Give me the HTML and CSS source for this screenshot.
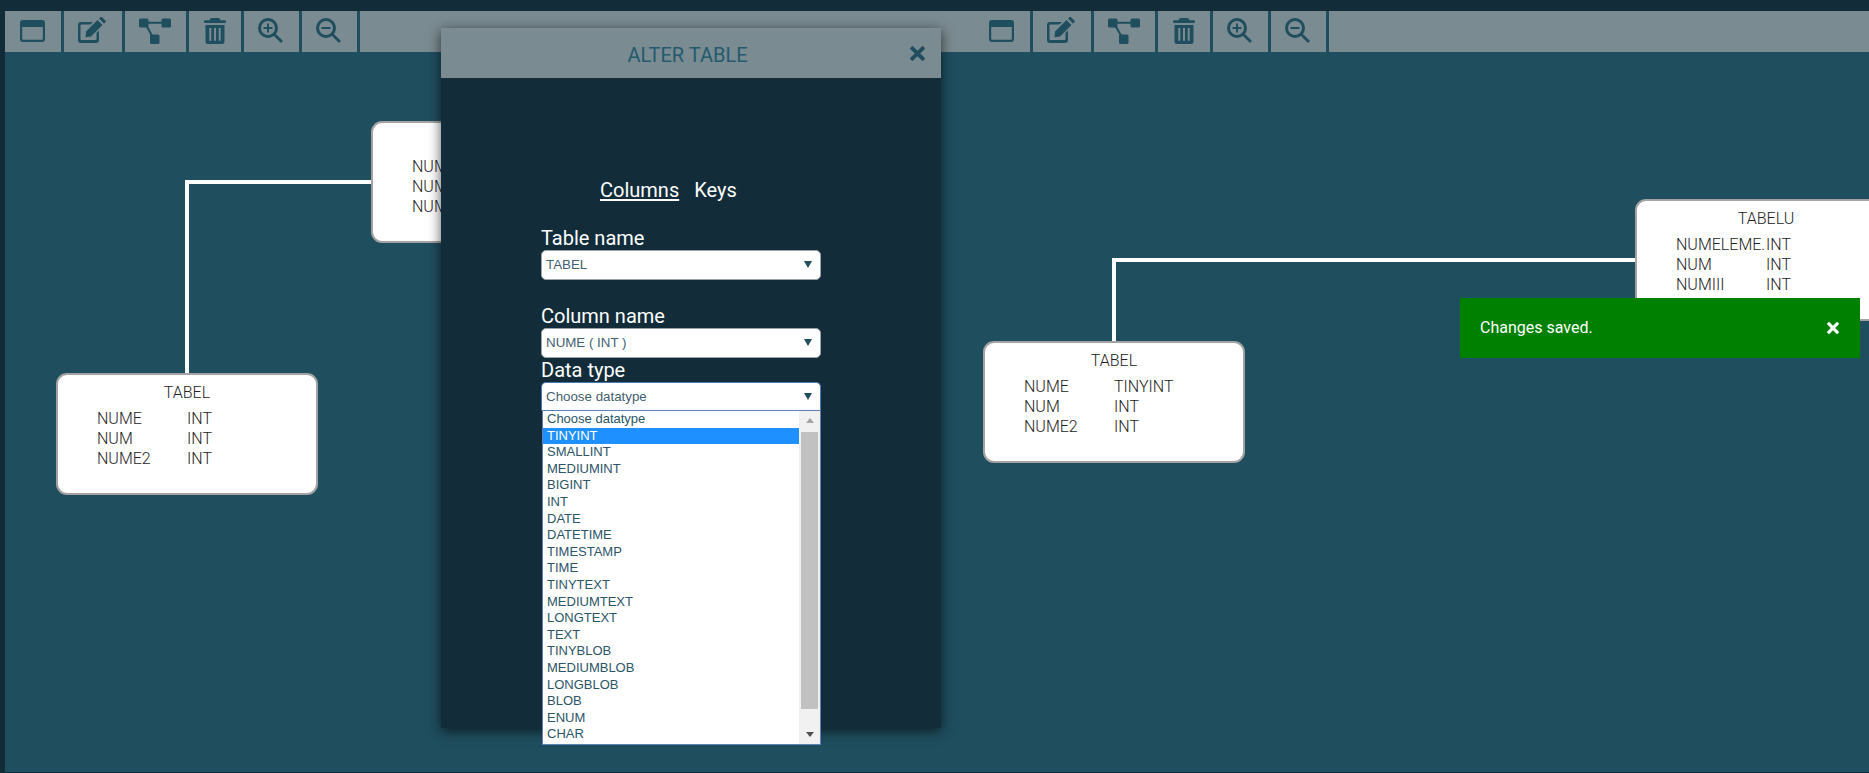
FILE: index.html
```html
<!DOCTYPE html>
<html lang="en">
<head>
<meta charset="utf-8">
<title>Alter table</title>
<link rel="stylesheet" href="styles.css">
</head>
<body>
<svg class="defs" width="0" height="0" aria-hidden="true">
  <defs>
    <symbol id="i-window" viewBox="0 0 25 22"><path d="M3 0h19a3 3 0 0 1 3 3v16a3 3 0 0 1-3 3H3a3 3 0 0 1-3-3V3a3 3 0 0 1 3-3zM2.200 7v11.800a1 1 0 0 0 1 1h18.600a1 1 0 0 0 1-1V7z" fill-rule="evenodd"/></symbol>
    <symbol id="i-edit" viewBox="0 0 28 26"><path d="M3 5h12l-2.500 2.500H3.500a1 1 0 0 0-1 1V22a1 1 0 0 0 1 1h14a1 1 0 0 0 1-1v-6l2.500-2.500V23a3 3 0 0 1-3 3H3a3 3 0 0 1-3-3V8a3 3 0 0 1 3-3z"/><path d="M8 14.500 19.500 3l5 5L13 19.500l-5.500.7zM21 1.500 22.500.3a1.200 1.200 0 0 1 1.600 0l3.400 3.400a1.200 1.200 0 0 1 0 1.600L26 6.500z"/></symbol>
    <symbol id="i-tree" viewBox="0 0 32 26"><rect width="9.500" height="9" y="0.500" rx="1.500"/><rect x="22.500" width="9.500" height="9" y="0.500" rx="1.500"/><rect x="11" y="16.500" width="9.500" height="9.500" rx="1.500"/><path d="M9 3.800h14v2H9zM6.500 8l1.800-1 5.500 10-1.800 1z"/></symbol>
    <symbol id="i-trash" viewBox="0 0 22 26"><path d="M7.500 0h7a1.500 1.500 0 0 1 1.400 1L16.500 2.200H21a1 1 0 0 1 1 1v.9a1 1 0 0 1-1 1H1a1 1 0 0 1-1-1v-.9a1 1 0 0 1 1-1h4.500L6.100 1A1.500 1.500 0 0 1 7.500 0z"/><path fill-rule="evenodd" d="M1.500 7h19v16.500A2.500 2.500 0 0 1 18 26H4a2.500 2.500 0 0 1-2.500-2.500zM5.300 10v12.800h2V10zM10 10v12.800h2V10zM14.700 10v12.800h2V10z"/></symbol>
    <symbol id="i-zoom-in" viewBox="0 0 25 25"><path fill-rule="evenodd" d="M10 0a10 10 0 1 1 0 20a10 10 0 0 1 0-20zm0 3a7 7 0 1 0 0 14a7 7 0 0 0 0-14z"/><path d="M15.500 17.500l2-2 7 7a.8.8 0 0 1 0 1.100l-.9.900a.8.8 0 0 1-1.100 0zM9 5.500h2V9h3.500v2H11v3.500H9V11H5.500V9H9z"/></symbol>
    <symbol id="i-zoom-out" viewBox="0 0 25 25"><path fill-rule="evenodd" d="M10 0a10 10 0 1 1 0 20a10 10 0 0 1 0-20zm0 3a7 7 0 1 0 0 14a7 7 0 0 0 0-14z"/><path d="M15.500 17.500l2-2 7 7a.8.8 0 0 1 0 1.100l-.9.900a.8.8 0 0 1-1.100 0zM5.500 9h9v2h-9z"/></symbol>
    <symbol id="i-close" viewBox="0 0 14 14"><path d="M3 .4 7 4.400 11 .4a1 1 0 0 1 1.400 0l1.200 1.200a1 1 0 0 1 0 1.400L9.600 7l4 4a1 1 0 0 1 0 1.400l-1.200 1.200a1 1 0 0 1-1.400 0L7 9.600l-4 4a1 1 0 0 1-1.400 0L.4 12.400a1 1 0 0 1 0-1.400l4-4-4-4a1 1 0 0 1 0-1.400L1.600.4A1 1 0 0 1 3 .4z"/></symbol>
  </defs>
</svg>

<div class="app">
  <div class="toolbars">
    <div class="toolbar">
      <button class="tool tool-a"><svg class="ic ic-window"><use href="#i-window"/></svg></button>
      <button class="tool tool-b"><svg class="ic ic-edit"><use href="#i-edit"/></svg></button>
      <button class="tool tool-c"><svg class="ic ic-tree"><use href="#i-tree"/></svg></button>
      <button class="tool tool-d"><svg class="ic ic-trash"><use href="#i-trash"/></svg></button>
      <button class="tool tool-e"><svg class="ic ic-zoom"><use href="#i-zoom-in"/></svg></button>
      <button class="tool tool-e"><svg class="ic ic-zoom"><use href="#i-zoom-out"/></svg></button>
    </div>
    <div class="toolbar toolbar-rest">
      <button class="tool tool-a"><svg class="ic ic-window"><use href="#i-window"/></svg></button>
      <button class="tool tool-b"><svg class="ic ic-edit"><use href="#i-edit"/></svg></button>
      <button class="tool tool-c"><svg class="ic ic-tree"><use href="#i-tree"/></svg></button>
      <button class="tool tool-d"><svg class="ic ic-trash"><use href="#i-trash"/></svg></button>
      <button class="tool tool-e"><svg class="ic ic-zoom"><use href="#i-zoom-in"/></svg></button>
      <button class="tool tool-e"><svg class="ic ic-zoom"><use href="#i-zoom-out"/></svg></button>
    </div>
  </div>

  <div class="canvas">
    <div class="wire wire-h1"></div>
    <div class="wire wire-v1"></div>
    <div class="wire wire-h2"></div>
    <div class="wire wire-v2"></div>

    <div class="node node-1">
      <div class="node-title">TABEL</div>
      <div class="node-row"><span>NUME</span><span>INT</span></div>
      <div class="node-row"><span>NUM</span><span>INT</span></div>
      <div class="node-row"><span>NUME2</span><span>INT</span></div>
    </div>
    <div class="node node-2">
      <div class="node-title">TABELU</div>
      <div class="node-row"><span>NUMELEME.</span><span>INT</span></div>
      <div class="node-row"><span>NUM</span><span>INT</span></div>
      <div class="node-row"><span>NUMIII</span><span>INT</span></div>
    </div>
    <div class="node node-3">
      <div class="node-title">TABEL</div>
      <div class="node-row"><span>NUME</span><span>TINYINT</span></div>
      <div class="node-row"><span>NUM</span><span>INT</span></div>
      <div class="node-row"><span>NUME2</span><span>INT</span></div>
    </div>
    <div class="node node-4">
      <div class="node-title">TABELU</div>
      <div class="node-row"><span>NUMELEME.</span><span>INT</span></div>
      <div class="node-row"><span>NUM</span><span>INT</span></div>
      <div class="node-row"><span>NUMIII</span><span>INT</span></div>
    </div>
  </div>

  <div class="toast">
    <span class="toast-text">Changes saved.</span>
    <svg class="toast-close"><use href="#i-close"/></svg>
  </div>

  <div class="modal">
    <div class="modal-head">
      <span class="modal-title">ALTER TABLE</span>
      <svg class="modal-close"><use href="#i-close"/></svg>
    </div>
    <div class="modal-body">
      <div class="tabs">
        <span class="tab tab-active">Columns</span>
        <span class="tab">Keys</span>
      </div>
      <div class="form">
        <div class="field field-table">
          <div class="label">Table name</div>
          <div class="select"><span>TABEL</span><i class="caret"></i></div>
        </div>
        <div class="field field-column">
          <div class="label">Column name</div>
          <div class="select"><span>NUME ( INT )</span><i class="caret"></i></div>
        </div>
        <div class="field field-type">
          <div class="label label-tight">Data type</div>
          <div class="select select-open"><span>Choose datatype</span><i class="caret"></i></div>
          <div class="dropdown">
            <ul class="options">
              <li>Choose datatype</li>
              <li class="selected">TINYINT</li>
              <li>SMALLINT</li>
              <li>MEDIUMINT</li>
              <li>BIGINT</li>
              <li>INT</li>
              <li>DATE</li>
              <li>DATETIME</li>
              <li>TIMESTAMP</li>
              <li>TIME</li>
              <li>TINYTEXT</li>
              <li>MEDIUMTEXT</li>
              <li>LONGTEXT</li>
              <li>TEXT</li>
              <li>TINYBLOB</li>
              <li>MEDIUMBLOB</li>
              <li>LONGBLOB</li>
              <li>BLOB</li>
              <li>ENUM</li>
              <li>CHAR</li>
            </ul>
            <div class="scrollbar">
              <i class="sb-up"></i>
              <div class="sb-track"><div class="sb-thumb"></div></div>
              <i class="sb-down"></i>
            </div>
          </div>
        </div>
      </div>
    </div>
  </div>
</div>
</body>
</html>
```
FILE: styles.css
```css
* { box-sizing: border-box; }
html, body { margin: 0; height: 100%; overflow: hidden; }
body { background: #122d39; font-family: Roboto, "Liberation Sans", sans-serif; }
.defs { position: absolute; }

.app {
  position: relative;
  width: 1869px;
  height: 773px;
  padding: 11px 0 1px 5px;
  display: flex;
  flex-direction: column;
}

.toolbars { display: flex; height: 41px; flex: none; }
.toolbar { display: flex; width: 969px; background: #7a8b91; }
.toolbar-rest { flex: 1; }
.tool {
  display: flex;
  align-items: flex-start;
  padding: 0;
  height: 41px;
  background: none;
  border: 0;
  border-right: 3px solid #1f4e5f;
  color: #1f4e5f;
}
.tool-a { width: 59px; padding: 9px 0 0 15px; }
.tool-b { width: 61px; padding: 6px 0 0 14px; }
.tool-c { width: 64px; padding: 7px 0 0 14px; }
.tool-d { width: 55px; padding: 7px 0 0 15px; }
.tool-e { width: 58px; padding: 7px 0 0 14px; }
.ic { fill: currentColor; display: block; }
.ic-window { width: 25px; height: 22px; }
.ic-edit { width: 28px; height: 26px; }
.ic-tree { width: 32px; height: 26px; }
.ic-trash { width: 22px; height: 26px; }
.ic-zoom { width: 25px; height: 25px; }

.canvas { position: relative; flex: 1; background: #1f4e5f; overflow: hidden; }

.wire { position: absolute; background: #fff; }
.wire-h1 { left: 180px; top: 128px; width: 190px; height: 4px; }
.wire-v1 { left: 180px; top: 128px; width: 4px; height: 195px; }
.wire-h2 { left: 1107px; top: 206px; width: 525px; height: 4px; }
.wire-v2 { left: 1107px; top: 206px; width: 4px; height: 85px; }

.node {
  position: absolute;
  width: 262px;
  height: 122px;
  padding: 8px 0 0 39px;
  background: #fff;
  border: 2px solid #a3a3a3;
  border-radius: 11px;
  color: #222;
  font-size: 16px;
  font-weight: 300;
  line-height: 20px;
}
.node-title { margin: 0 0 6px -39px; text-align: center; }
.node-row { display: flex; }
.node-row span:first-child { width: 90px; flex: none; }
.node-1 { left: 51px; top: 321px; }
.node-2 { left: 366px; top: 69px; }
.node-3 { left: 978px; top: 289px; }
.node-4 { left: 1630px; top: 147px; }

.toast {
  position: absolute;
  left: 1460px;
  top: 298px;
  width: 400px;
  height: 60px;
  padding: 0 21px 0 20px;
  display: flex;
  align-items: center;
  justify-content: space-between;
  background: #008000;
  color: #fff;
  font-size: 16px;
}
.toast-text { margin-bottom: 2px; }
.toast-close { width: 12px; height: 12px; fill: #fff; }

.modal {
  position: absolute;
  left: 441px;
  top: 28px;
  width: 500px;
  height: 700px;
  background: #122d39;
  box-shadow: 0 3px 12px rgba(0, 0, 0, .65);
}
.modal-head {
  position: relative;
  height: 50px;
  display: flex;
  align-items: center;
  justify-content: center;
  background: #7a8b91;
}
.modal-title { margin: 3px 7px 0 0; color: #235a6e; font-size: 20px; }
.modal-close {
  position: absolute;
  right: 16px;
  top: 18px;
  width: 15px;
  height: 15px;
  fill: #1f4e5f;
}

.modal-body { padding: 101px 0 0 100px; color: #fff; }
.tabs { display: flex; gap: 15px; padding-left: 59px; font-size: 20px; line-height: 22px; }
.tab-active { text-decoration: underline; text-underline-offset: 2px; }

.form { width: 280px; margin-top: 24px; }
.field { position: relative; }
.field-column { margin-top: 23px; }
.label { height: 25px; line-height: 26px; font-size: 20px; }
.label-tight { height: 24px; line-height: 24px; }

.select {
  display: flex;
  align-items: center;
  justify-content: space-between;
  height: 30px;
  padding: 0 8px 2px 4px;
  background: #fff;
  border: 1px solid #9aa5a9;
  border-radius: 5px;
  color: #3f6172;
  font: 13.330px "Liberation Sans", Arial, sans-serif;
}
.select-open { height: 29px; padding-bottom: 0; border: 1px solid #4a7ab5; border-bottom: 1px solid #122d39; border-radius: 5px 5px 0 0; }
.caret {
  width: 0;
  height: 0;
  border-left: 4px solid transparent;
  border-right: 4px solid transparent;
  border-top: 7px solid #1f4e5f;
}

.dropdown {
  position: absolute;
  top: 52px;
  left: 1px;
  width: 279px;
  height: 335px;
  display: flex;
  background: #fff;
  border: 1px solid #5f80b5;
}
.options {
  flex: 1;
  margin: 0;
  padding: 0;
  list-style: none;
  color: #2c5567;
  font: 13px/16.600px "Liberation Sans", Arial, sans-serif;
}
.options li { height: 16.600px; padding-left: 4px; white-space: nowrap; }
.options .selected { background: #1e90ff; color: #fff; }

.scrollbar {
  width: 21px;
  flex: none;
  display: flex;
  flex-direction: column;
  align-items: center;
  background: #f1f1f1;
}
.sb-up, .sb-down { flex: none; width: 0; height: 0; margin: 7px 0; border-left: 4.500px solid transparent; border-right: 4.500px solid transparent; }
.sb-up { margin-bottom: 9px; border-bottom: 5px solid #a3a3a3; }
.sb-down { border-top: 5px solid #505050; }
.sb-track { flex: 1; width: 100%; padding: 0 2px; }
.sb-thumb { height: 277px; background: #c1c1c1; }
```
